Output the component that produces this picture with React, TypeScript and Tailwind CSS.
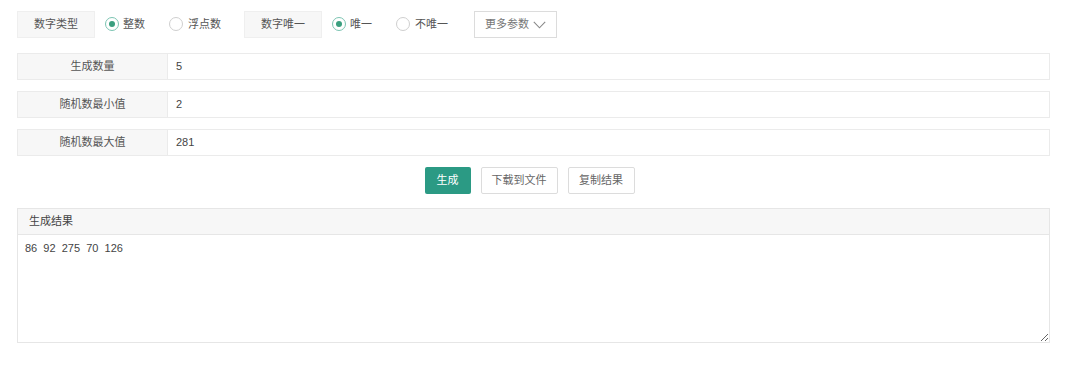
import React from "react";

const font = { fontFamily: '"Liberation Sans", "Noto Sans CJK SC", sans-serif' };

function Radio({ checked }: { checked?: boolean }) {
  return (
    <span
      className={
        "flex h-[14px] w-[14px] shrink-0 items-center justify-center rounded-full border bg-white " +
        (checked ? "border-[#7cc4b2]" : "border-[#cfcfcf]")
      }
    >
      {checked && <span className="h-[6px] w-[6px] rounded-full bg-[#3a9f7f]" />}
    </span>
  );
}

function Row({ label, value }: { label: string; value: string }) {
  return (
    <div className="flex h-[27px] border border-[#ebebeb] bg-white">
      <div className="flex w-[150px] shrink-0 items-center justify-center border-r border-[#ebebeb] bg-[#f7f7f7] text-[#555]">
        {label}
      </div>
      <div className="flex items-center pl-[8px] text-[#444]">{value}</div>
    </div>
  );
}

export default function App() {
  return (
    <div className="min-h-[365px] w-[1080px] bg-white text-[11px]" style={font}>
      <div className="pl-[17px] pr-[30px] pt-[10px]">
        {/* top row */}
        <div className="flex items-center">
          <div className="flex h-[27px] w-[78px] items-center justify-center border border-[#efefef] bg-[#f7f7f7] text-[#555]">
            数字类型
          </div>
          <span className="ml-[10px]"><Radio checked /></span>
          <span className="ml-[4px] text-[#555]">整数</span>
          <span className="ml-[24px]"><Radio /></span>
          <span className="ml-[5px] text-[#555]">浮点数</span>
          <div className="ml-[23px] flex h-[27px] w-[78px] items-center justify-center border border-[#efefef] bg-[#f7f7f7] text-[#555]">
            数字唯一
          </div>
          <span className="ml-[10px]"><Radio checked /></span>
          <span className="ml-[4px] text-[#555]">唯一</span>
          <span className="ml-[24px]"><Radio /></span>
          <span className="ml-[5px] text-[#555]">不唯一</span>
          <div className="ml-[26px] mt-[1px] flex h-[27px] w-[83px] items-center justify-center gap-[4px] border border-[#dcdcdc] bg-white text-[#777]">
            <span>更多参数</span>
            <svg width="13" height="8" viewBox="0 0 13 8" fill="none">
              <polyline points="0.8,0.8 6.5,6.8 12.2,0.8" stroke="#888" strokeWidth="1.1" />
            </svg>
          </div>
        </div>

        {/* rows */}
        <div className="mt-[15px] flex flex-col gap-[11px]">
          <Row label="生成数量" value="5" />
          <Row label="随机数最小值" value="2" />
          <Row label="随机数最大值" value="281" />
        </div>

        {/* buttons */}
        <div className="mt-[11px] flex justify-center gap-[10px] pr-[8px]">
          <button className="h-[27px] w-[46px] rounded-[2px] bg-[#2b9a84] text-white">生成</button>
          <button className="h-[27px] w-[77px] rounded-[2px] border border-[#dcdcdc] bg-white text-[#666]">下载到文件</button>
          <button className="h-[27px] w-[67px] rounded-[2px] border border-[#dcdcdc] bg-white text-[#666]">复制结果</button>
        </div>

        {/* result */}
        <div className="mt-[14px] border border-[#e6e6e6]">
          <div className="flex h-[26px] items-center border-b border-[#e6e6e6] bg-[#f7f7f7] pl-[11px] text-[#444]">
            生成结果
          </div>
          <textarea
            readOnly
            value={"86  92  275  70  126"}
            className="block h-[107px] w-full resize-y bg-white px-[7px] pt-[5px] text-[11px] text-[#444] outline-none"
            style={font}
          />
        </div>
      </div>
    </div>
  );
}
